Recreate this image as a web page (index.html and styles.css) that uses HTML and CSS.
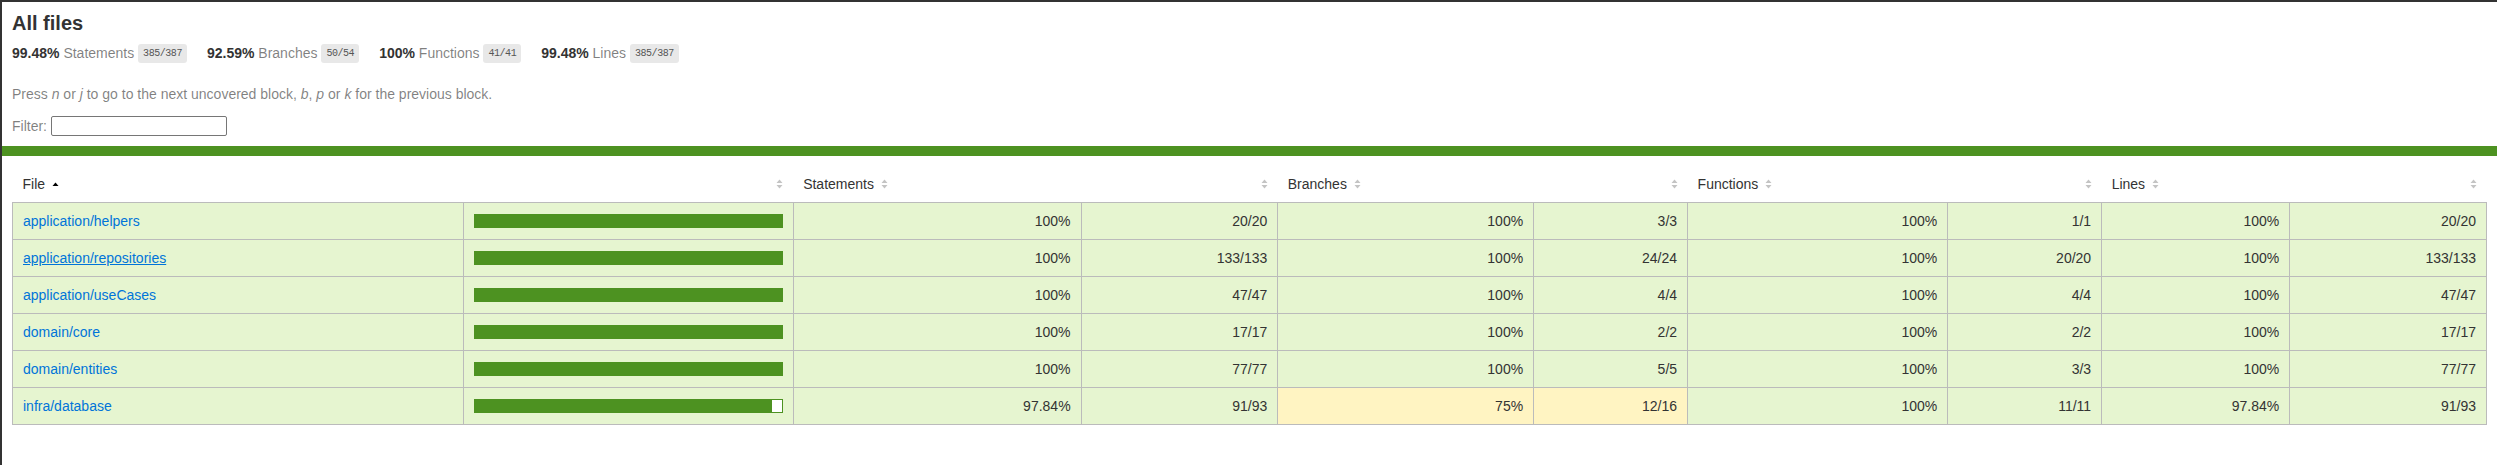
FILE: index.html
```html
<!doctype html>
<html lang="en">
<head>
<meta charset="utf-8">
<title>Code coverage report for All files</title>
<link rel="stylesheet" href="styles.css">
</head>
<body>
<div class="wrapper">
  <div class="pad1">
    <h1>All files</h1>
    <div class="stats">
      <div class="stat">
        <span class="strong">99.48% </span>
        <span class="quiet">Statements</span>
        <span class="fraction">385/387</span>
      </div>
      <div class="stat">
        <span class="strong">92.59% </span>
        <span class="quiet">Branches</span>
        <span class="fraction">50/54</span>
      </div>
      <div class="stat">
        <span class="strong">100% </span>
        <span class="quiet">Functions</span>
        <span class="fraction">41/41</span>
      </div>
      <div class="stat">
        <span class="strong">99.48% </span>
        <span class="quiet">Lines</span>
        <span class="fraction">385/387</span>
      </div>
    </div>
    <p class="quiet help">Press <em>n</em> or <em>j</em> to go to the next uncovered block, <em>b</em>, <em>p</em> or <em>k</em> for the previous block.</p>
    <div class="quiet filter">Filter: <input type="search" class="file-search"></div>
  </div>
  <div class="status-line high"></div>
  <div class="pad1">
    <table class="coverage-summary">
      <thead>
        <tr>
          <th class="file sorted">File<svg class="sorter" viewBox="0 0 7 10" aria-hidden="true"><path class="arrow-on" d="M0.5 7L3.5 3.5L6.5 7Z"/></svg></th>
          <th class="pic"><svg class="sorter" viewBox="0 0 7 10" aria-hidden="true"><path d="M0.5 4L3.5 0.5L6.5 4Z M0.5 6L6.5 6L3.5 9.5Z"/></svg></th>
          <th class="pct">Statements<svg class="sorter" viewBox="0 0 7 10" aria-hidden="true"><path d="M0.5 4L3.5 0.5L6.5 4Z M0.5 6L6.5 6L3.5 9.5Z"/></svg></th>
          <th class="abs"><svg class="sorter" viewBox="0 0 7 10" aria-hidden="true"><path d="M0.5 4L3.5 0.5L6.5 4Z M0.5 6L6.5 6L3.5 9.5Z"/></svg></th>
          <th class="pct">Branches<svg class="sorter" viewBox="0 0 7 10" aria-hidden="true"><path d="M0.5 4L3.5 0.5L6.5 4Z M0.5 6L6.5 6L3.5 9.5Z"/></svg></th>
          <th class="abs"><svg class="sorter" viewBox="0 0 7 10" aria-hidden="true"><path d="M0.5 4L3.5 0.5L6.5 4Z M0.5 6L6.5 6L3.5 9.5Z"/></svg></th>
          <th class="pct">Functions<svg class="sorter" viewBox="0 0 7 10" aria-hidden="true"><path d="M0.5 4L3.5 0.5L6.5 4Z M0.5 6L6.5 6L3.5 9.5Z"/></svg></th>
          <th class="abs"><svg class="sorter" viewBox="0 0 7 10" aria-hidden="true"><path d="M0.5 4L3.5 0.5L6.5 4Z M0.5 6L6.5 6L3.5 9.5Z"/></svg></th>
          <th class="pct">Lines<svg class="sorter" viewBox="0 0 7 10" aria-hidden="true"><path d="M0.5 4L3.5 0.5L6.5 4Z M0.5 6L6.5 6L3.5 9.5Z"/></svg></th>
          <th class="abs"><svg class="sorter" viewBox="0 0 7 10" aria-hidden="true"><path d="M0.5 4L3.5 0.5L6.5 4Z M0.5 6L6.5 6L3.5 9.5Z"/></svg></th>
        </tr>
      </thead>
      <tbody>
        <tr>
          <td class="file high"><a href="#">application/helpers</a></td>
          <td class="pic high"><div class="chart"><div class="cover-fill cover-full" style="width: 100%"></div><div class="cover-empty" style="width: 0%"></div></div></td>
          <td class="pct high">100%</td>
          <td class="abs high">20/20</td>
          <td class="pct high">100%</td>
          <td class="abs high">3/3</td>
          <td class="pct high">100%</td>
          <td class="abs high">1/1</td>
          <td class="pct high">100%</td>
          <td class="abs high">20/20</td>
        </tr>
        <tr>
          <td class="file high"><a href="#" class="hovered">application/repositories</a></td>
          <td class="pic high"><div class="chart"><div class="cover-fill cover-full" style="width: 100%"></div><div class="cover-empty" style="width: 0%"></div></div></td>
          <td class="pct high">100%</td>
          <td class="abs high">133/133</td>
          <td class="pct high">100%</td>
          <td class="abs high">24/24</td>
          <td class="pct high">100%</td>
          <td class="abs high">20/20</td>
          <td class="pct high">100%</td>
          <td class="abs high">133/133</td>
        </tr>
        <tr>
          <td class="file high"><a href="#">application/useCases</a></td>
          <td class="pic high"><div class="chart"><div class="cover-fill cover-full" style="width: 100%"></div><div class="cover-empty" style="width: 0%"></div></div></td>
          <td class="pct high">100%</td>
          <td class="abs high">47/47</td>
          <td class="pct high">100%</td>
          <td class="abs high">4/4</td>
          <td class="pct high">100%</td>
          <td class="abs high">4/4</td>
          <td class="pct high">100%</td>
          <td class="abs high">47/47</td>
        </tr>
        <tr>
          <td class="file high"><a href="#">domain/core</a></td>
          <td class="pic high"><div class="chart"><div class="cover-fill cover-full" style="width: 100%"></div><div class="cover-empty" style="width: 0%"></div></div></td>
          <td class="pct high">100%</td>
          <td class="abs high">17/17</td>
          <td class="pct high">100%</td>
          <td class="abs high">2/2</td>
          <td class="pct high">100%</td>
          <td class="abs high">2/2</td>
          <td class="pct high">100%</td>
          <td class="abs high">17/17</td>
        </tr>
        <tr>
          <td class="file high"><a href="#">domain/entities</a></td>
          <td class="pic high"><div class="chart"><div class="cover-fill cover-full" style="width: 100%"></div><div class="cover-empty" style="width: 0%"></div></div></td>
          <td class="pct high">100%</td>
          <td class="abs high">77/77</td>
          <td class="pct high">100%</td>
          <td class="abs high">5/5</td>
          <td class="pct high">100%</td>
          <td class="abs high">3/3</td>
          <td class="pct high">100%</td>
          <td class="abs high">77/77</td>
        </tr>
        <tr>
          <td class="file high"><a href="#">infra/database</a></td>
          <td class="pic high"><div class="chart"><div class="cover-fill" style="width: 97%"></div><div class="cover-empty" style="width: 3%"></div></div></td>
          <td class="pct high">97.84%</td>
          <td class="abs high">91/93</td>
          <td class="pct medium">75%</td>
          <td class="abs medium">12/16</td>
          <td class="pct high">100%</td>
          <td class="abs high">11/11</td>
          <td class="pct high">97.84%</td>
          <td class="abs high">91/93</td>
        </tr>
      </tbody>
    </table>
  </div>
</div>
</body>
</html>
```

FILE: styles.css
```css
*, *::before, *::after {
  box-sizing: border-box;
}

html, body {
  margin: 0;
  padding: 0;
  height: 100%;
}

body {
  font-family: "Liberation Sans", Arial, Helvetica, sans-serif;
  font-size: 14px;
  color: #333;
  background: #fff;
  border-top: 2px solid #333;
  border-left: 2px solid #333;
}

.wrapper {
  min-height: 100%;
}

h1 {
  font-size: 20px;
  line-height: 23px;
  margin: 0;
}

a {
  color: #0074D9;
  text-decoration: none;
}

a.hovered {
  text-decoration: underline;
}

.pad1 {
  padding: 10px;
}

.strong {
  font-weight: bold;
}

.quiet {
  color: rgba(0, 0, 0, 0.5);
}

.stats {
  display: flex;
  flex-wrap: wrap;
}

.stat {
  padding: 10px 0;
  margin-right: 20px;
  line-height: 16px;
}

.fraction {
  font-family: Consolas, "Liberation Mono", "DejaVu Sans Mono", monospace;
  font-size: 10px;
  letter-spacing: -0.45px;
  color: #555;
  background: #E8E8E8;
  padding: 4px 5px;
  border-radius: 3px;
  vertical-align: middle;
}

.help {
  margin: 14px 0;
  line-height: 16px;
}

.filter {
  display: flex;
  align-items: center;
  gap: 4px;
  height: 20px;
}

.file-search {
  width: 176px;
  height: 20px;
  margin: 0;
  padding: 1px 2px;
  border: 1px solid #767676;
  border-radius: 2px;
  font-family: "Liberation Sans", Arial, sans-serif;
  font-size: 13px;
  background: #fff;
}

.status-line {
  height: 10px;
}

.status-line.high {
  background: rgb(77, 146, 33);
}

.coverage-summary {
  border-collapse: collapse;
  width: 100%;
}

.coverage-summary tr {
  border-bottom: 1px solid #bbb;
}

.coverage-summary tbody {
  border: 1px solid #bbb;
}

.coverage-summary td,
.coverage-summary th {
  padding: 10px;
  line-height: 16px;
}

.coverage-summary td {
  border-right: 1px solid #bbb;
}

.coverage-summary td:last-child {
  border-right: none;
}

.coverage-summary th {
  text-align: left;
  font-weight: normal;
  white-space: nowrap;
}

.coverage-summary th.pic,
.coverage-summary th.abs,
.coverage-summary td.pct,
.coverage-summary td.abs {
  text-align: right;
}

.coverage-summary td.file {
  white-space: nowrap;
}

.coverage-summary td.pic {
  min-width: 120px;
}

.sorter {
  display: inline-block;
  width: 7px;
  height: 10px;
  margin-left: 7px;
  fill: #c4c4c4;
}

.sorted .sorter {
  fill: #000;
}

.high {
  background: rgb(230, 245, 208);
}

.medium {
  background: #fff4c2;
}

.chart {
  line-height: 0;
}

.high .chart {
  border: 1px solid rgb(77, 146, 33);
}

.cover-fill,
.cover-empty {
  display: inline-block;
  height: 12px;
}

.high .cover-fill {
  background: rgb(77, 146, 33);
}

.cover-empty {
  background: #fff;
}
```
